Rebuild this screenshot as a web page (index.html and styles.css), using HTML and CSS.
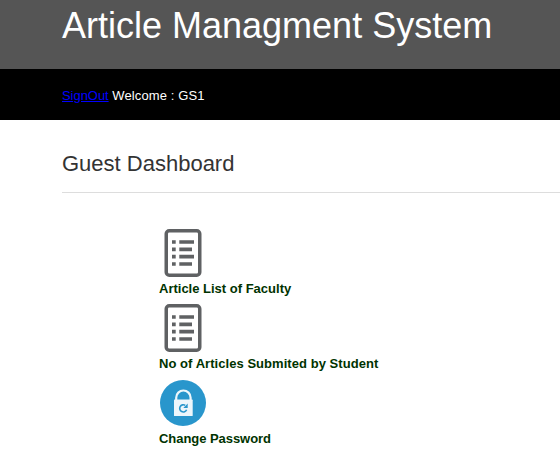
FILE: index.html
```html
<!DOCTYPE html>
<html lang="en">
<head>
<meta charset="utf-8">
<title>Article Managment System</title>
<link rel="stylesheet" href="styles.css">
</head>
<body>
<header class="banner"><h1>Article Managment System</h1></header>
<nav class="bar"><a href="#">SignOut</a> <span class="welcome">Welcome : GS1</span></nav>
<main>
<h2>Guest Dashboard</h2>
<div class="menu">
<div class="item">
<svg class="icon" viewBox="0 0 50 50"><rect x="7.25" y="2.75" width="33.5" height="44.5" rx="3" fill="#fff" stroke="#5f6163" stroke-width="3.5"/><path d="M13 14h3.7M13 21.3h3.7M13 28.7h3.7M13 36h3.7M20.3 14H35M20.3 21.3H33M20.3 28.7H35M20.3 36H33" stroke="#5f6163" stroke-width="3.7"/></svg>
<span>Article List of Faculty</span>
</div>
<div class="item articles">
<svg class="icon" viewBox="0 0 50 50"><rect x="7.25" y="2.75" width="33.5" height="44.5" rx="3" fill="#fff" stroke="#5f6163" stroke-width="3.5"/><path d="M13 14h3.7M13 21.3h3.7M13 28.7h3.7M13 36h3.7M20.3 14H35M20.3 21.3H33M20.3 28.7H35M20.3 36H33" stroke="#5f6163" stroke-width="3.7"/></svg>
<span>No of Articles Submited by Student</span>
</div>
<div class="item password">
<svg class="icon" viewBox="0 0 50 50"><circle cx="24" cy="25" r="23" fill="#2996cc"/><path d="M17.2 22.5v-2.8a7.2 7.2 0 0 1 14.4 0v2.8" fill="none" stroke="#edf6fb" stroke-width="2.2"/><rect x="15" y="21.6" width="18.7" height="16.5" rx=".6" fill="#edf6fb"/><path d="M26.2 27.3a3.6 3.6 0 1 0 1.4 4.5" fill="none" stroke="#2996cc" stroke-width="1.6"/><path d="M28.7 25.5v4.4h-4.4z" fill="#2996cc"/></svg>
<span>Change Password</span>
</div>
</div>
</main>
</body>
</html>
```
FILE: styles.css
```css
* { box-sizing: border-box; }
body { margin: 0; background: #fff; font: 13px/15px "Liberation Sans", Arial, sans-serif; overflow: hidden; }
.banner { height: 69px; padding: 5px 0 0 62px; background: #555; color: #fff; }
h1 { margin: 0; font-size: 36px; line-height: 42px; font-weight: 400; white-space: nowrap; }
.bar { height: 51px; padding: 19px 0 0 62px; background: #000; color: #fff; }
.bar a { color: #00f; letter-spacing: -.05px; }
.welcome { letter-spacing: .12px; }
main { padding-left: 62px; }
h2 { height: 73px; margin: 0; padding-top: 31px; border-bottom: 1px solid #ddd; color: #333; font-size: 22px; line-height: 26px; font-weight: 400; }
.menu { padding: 35px 0 0 97px; }
.item { height: 75px; color: #030; font-weight: 700; }
.articles { letter-spacing: .05px; }
.password { letter-spacing: -.05px; }
.icon { display: block; width: 50px; height: 50px; margin-bottom: 3px; }
```
